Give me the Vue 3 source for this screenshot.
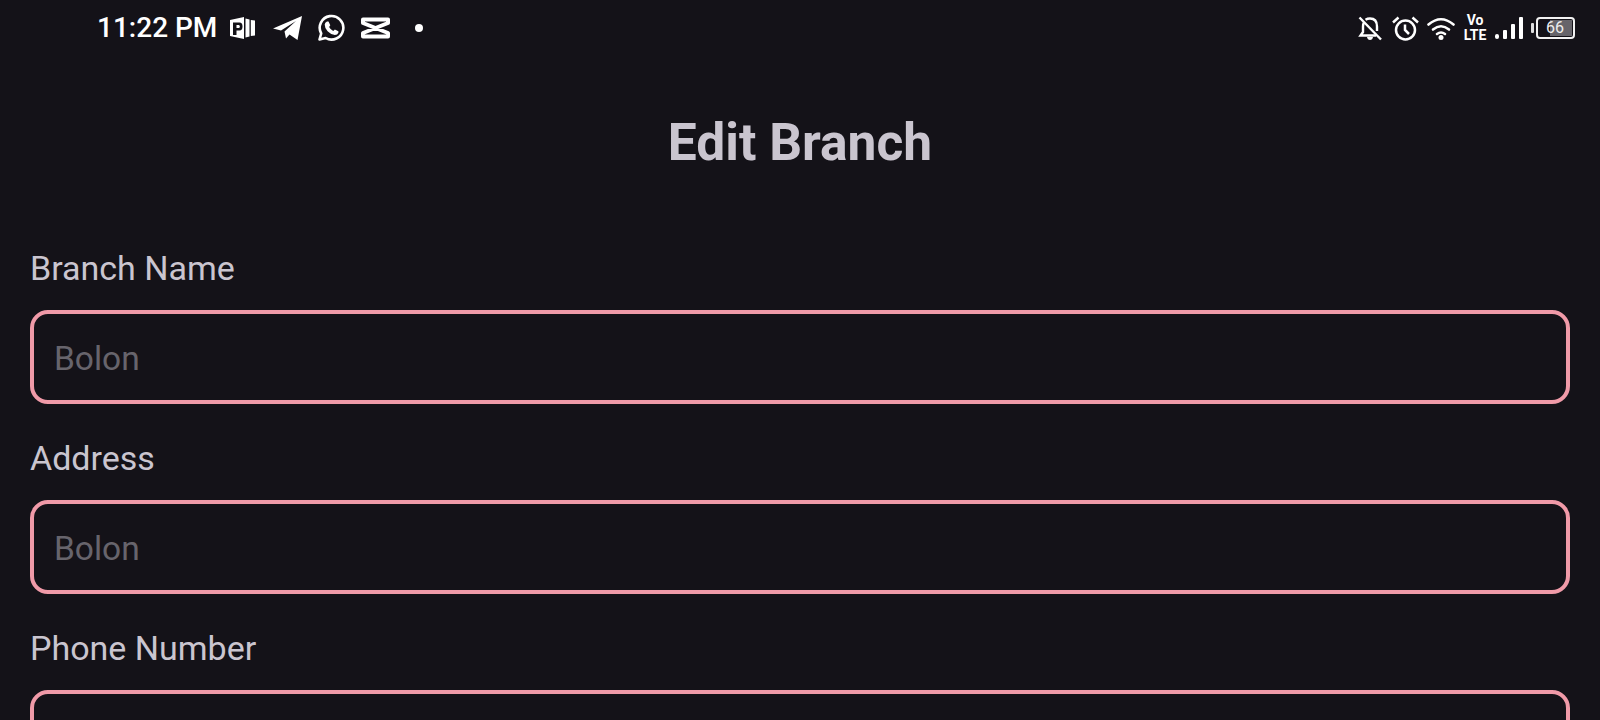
<script setup>
const fields = [
  { label: 'Branch Name', placeholder: 'Bolon' },
  { label: 'Address', placeholder: 'Bolon' },
  { label: 'Phone Number', placeholder: '' }
]
</script>

<template>
  <div class="screen">
    <div class="status">
      <div class="left">
        <span class="time">11:22 PM</span>
        <svg class="ic" width="25" height="22" viewBox="0 0 25 22">
          <path fill="#fff" d="M0 3 14 0v22L0 19z" />
          <path fill="#141218" d="M3 5.500h6.500q3 0 3 4t-3 4H6.500V18H3z" />
          <path fill="#fff" d="M6.500 8h2.300q1 0 1 1.500T8.800 11H6.500z" />
          <path fill="#fff" d="M15.500 1.500 19.500 2.500v17l-4 1z" />
          <path fill="#fff" d="M20.800 3 25 3.500v15l-4.200.5z" />
        </svg>
        <svg class="ic tg" width="29" height="24" viewBox="0 0 29 24">
          <path fill="#fff" d="M0 12.500 29 0l-4.500 24-8-5.500-3.500 4-1.500-7L23 5 8 14.500z" />
        </svg>
        <svg class="ic wa" width="28" height="28" viewBox="0 0 28 28">
          <path fill="none" stroke="#fff" stroke-width="2.600" d="M2.500 25.500l1.700-6A11.800 11.800 0 1 1 8.600 24z" stroke-linejoin="round" />
          <path fill="#fff" d="M10 7.500h1.500l1.800 3.700-1.200 1.700q1.500 2.800 4.100 4l1.700-1.500 3.500 1.800v1.500q-1 2.300-3.500 2.300-3.900-.3-7.300-3.800Q7.500 13.500 7.700 10.500q.2-2.200 2.300-3z" />
        </svg>
        <svg class="ic cc" width="29" height="22" viewBox="0 0 29 22">
          <path fill="none" stroke="#fff" stroke-width="4" stroke-linejoin="round" d="M27 2.500H2v3.500L27 16v3.500H2V16L27 6V2.500z" />
        </svg>
        <span class="dot"></span>
      </div>
      <div class="right">
        <svg width="24" height="25" viewBox="0 0 24 25">
          <g fill="none" stroke="#fff" stroke-width="2.400">
            <path d="M6 6.500Q5 8 5 10.500V16L2.500 19.500H18M7.500 3.800Q9.500 2.500 12 2.500q7 0 7 8V15" />
            <path d="M1.500 1.500 23 23.500" />
          </g>
          <path fill="#fff" d="M9 21h6q-.5 3-3 3t-3-3z" />
        </svg>
        <svg class="alarm" width="27" height="25" viewBox="0 0 27 25">
          <g fill="none" stroke="#fff" stroke-width="2.500">
            <circle cx="13.500" cy="14" r="9.500" />
            <path d="M13 8.500V14l4 4M1 6.500 6.500 1.500M26 6.500 20.500 1.500" />
          </g>
        </svg>
        <svg width="28" height="23" viewBox="0 0 28 23">
          <g fill="none" stroke="#fff" stroke-width="2.600" stroke-linecap="round">
            <path d="M1.500 7.500Q14-3 26.500 7.500" />
            <path d="M6 12.500q8-6.500 16 0" />
            <path d="M10 17q4-3 8 0" />
          </g>
          <circle fill="#fff" cx="14" cy="20.500" r="2.500" />
        </svg>
        <div class="volte"><div>Vo</div><div>LTE</div></div>
        <svg width="28" height="22" viewBox="0 0 28 22">
          <rect fill="#fff" x="0" y="17" width="4" height="5" rx="2" />
          <rect fill="#fff" x="8" y="13" width="4" height="9" rx="1" />
          <rect fill="#fff" x="16" y="7" width="4" height="15" rx="1" />
          <rect fill="#fff" x="24" y="0" width="4" height="22" rx="1" />
        </svg>
        <div class="battery">
          <span class="nub"></span>
          <div class="cell"><span class="fill"></span><span class="level">66</span></div>
        </div>
      </div>
    </div>

    <h1 class="title">Edit Branch</h1>

    <form class="form">
      <div v-for="f in fields" :key="f.label" class="field">
        <label>{{ f.label }}</label>
        <div class="input">{{ f.placeholder }}</div>
      </div>
    </form>
  </div>
</template>

<style scoped>
.screen { width: 1600px; height: 720px; overflow: hidden; background: #141218; font-family: Roboto, "Liberation Sans", sans-serif; }
.status { height: 56px; display: flex; align-items: center; justify-content: space-between; padding: 0 25px 0 97px; }
.left { display: flex; align-items: center; }
.right { display: flex; align-items: center; gap: 8px; }
.alarm { margin-left: 2px; }
.time { color: #fff; font-size: 28px; font-weight: 500; line-height: 30px; width: 133px; }
.ic { display: block; }
.tg { margin-left: 18px; }
.wa { margin-left: 15px; }
.cc { margin-left: 16px; }
.dot { width: 8px; height: 8px; border-radius: 50%; background: #fff; margin-left: 25px; }
.volte { display: flex; flex-direction: column; align-items: center; color: #fff; font-weight: 700; width: 24px; font-size: 14px; line-height: 15px; }
.battery { display: flex; align-items: center; gap: 2px; }
.nub { width: 3px; height: 10px; background: #ddd; border-radius: 1px; }
.cell { position: relative; width: 39px; height: 22px; border: 2px solid #f2f2f2; border-radius: 4px; box-sizing: border-box; }
.fill { position: absolute; top: 1px; right: 1px; bottom: 1px; width: 22px; background: #66646a; }
.level { position: absolute; left: 8px; top: 0; color: #eee; font-size: 16px; line-height: 18px; }
.title { margin: 0; padding-top: 59px; height: 191px; box-sizing: border-box; text-align: center; color: #cac5cf; font-size: 51.500px; font-weight: 700; line-height: 56px; }
.form { display: flex; flex-direction: column; gap: 33px; padding: 0 30px; }
.field { display: flex; flex-direction: column; gap: 21px; }
label { color: #cac5cf; font-size: 34px; line-height: 42px; height: 42px; }
.input { height: 94px; box-sizing: border-box; border: 4px solid #f09aa8; border-radius: 18px; padding: 0 20px; color: #67646c; font-size: 33.500px; line-height: 90px; }
</style>
